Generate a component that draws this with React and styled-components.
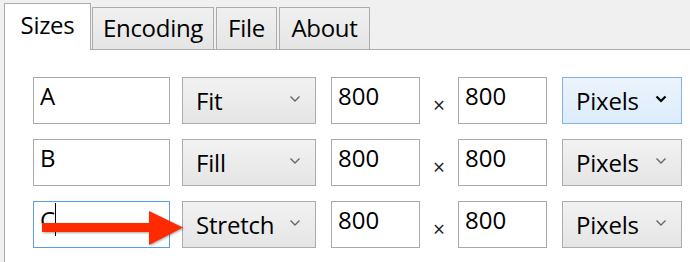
import React from 'react';
import styled, { createGlobalStyle, css } from 'styled-components';

const GlobalStyle = createGlobalStyle`
  html, body {
    margin: 0;
    padding: 0;
    background: #f0f0f0;
    overflow: hidden;
  }
  body {
    font-family: "Open Sans", "Noto Sans", sans-serif;
    color: #000;
  }
`;

const Window = styled.div`
  width: 690px;
  height: 262px;
  padding: 3px 0 0 4px;
  box-sizing: border-box;
  overflow: hidden;
`;

const TabStrip = styled.div`
  display: flex;
  align-items: flex-end;
  height: 46px;
`;

const Tab = styled.div`
  box-sizing: border-box;
  width: ${props => props.$width}px;
  height: 42px;
  margin-left: ${props => (props.$gap === undefined ? 2 : props.$gap)}px;
  border: 1px solid #acacac;
  border-bottom: none;
  background: linear-gradient(#f0f0f0, #e5e5e5);
  font-size: 24px;
  line-height: 39px;
  text-align: center;
  letter-spacing: -0.3px;
  white-space: nowrap;

  ${props => props.$active && css`
    position: relative;
    z-index: 1;
    height: 47px;
    margin: 0 0 -1px 0;
    background: #fff;
    line-height: 42px;
  `}
`;

const Pane = styled.div`
  position: relative;
  width: 720px;
  height: 240px;
  box-sizing: border-box;
  border: 1px solid #acacac;
  background: #fff;
  padding: 27px 0 0 28px;
  display: flex;
  flex-direction: column;
  gap: 15px;
`;

const Row = styled.div`
  display: flex;
  align-items: stretch;
  height: 47px;
`;

const Field = styled.div`
  box-sizing: border-box;
  width: ${props => props.$width}px;
  margin-left: ${props => props.$gap || 0}px;
  border: 1px solid ${props => (props.$focused ? '#5a9fe6' : '#a9a9a9')};
  background: #fff;
  padding: 2px 6px 0;
  font-size: 24px;
  line-height: 31px;
  display: flex;
  align-items: flex-start;
`;

const Caret = styled.span`
  display: block;
  width: 1px;
  height: 33px;
  margin-top: -1px;
  background: #000;
`;

const Select = styled.div`
  box-sizing: border-box;
  width: ${props => props.$width}px;
  margin-left: ${props => props.$gap || 0}px;
  border: 1px solid ${props => (props.$hover ? '#7eb4ea' : '#acacac')};
  background: ${props => (props.$hover
    ? 'linear-gradient(#ecf4fc, #dcecfc)'
    : 'linear-gradient(#f2f2f2, #e5e5e5)')};
  padding: 0 14px 0 13px;
  display: flex;
  align-items: center;
  justify-content: space-between;
  font-size: 24px;
  line-height: 30px;
  letter-spacing: -0.2px;
`;

const Chevron = styled.svg`
  width: 12px;
  height: 8px;
  margin-top: -4px;
  flex: none;
`;

const Times = styled.div`
  width: 38px;
  display: flex;
  justify-content: center;
  align-items: center;
  padding-top: 9px;
  font-size: 21px;
  color: #222;
`;

const Arrow = styled.svg`
  position: absolute;
  left: 35px;
  top: 158px;
  width: 146px;
  height: 40px;
  overflow: visible;
  filter: drop-shadow(1px 1px 1px rgba(0, 0, 0, 0.35));
`;

const ChevronIcon = ({ dark }) => (
  <Chevron viewBox="0 0 12 8">
    <path
      d="M1.5 1.5 L6 6 L10.5 1.5"
      fill="none"
      stroke={dark ? '#000' : '#666'}
      strokeWidth={dark ? 2.2 : 1.4}
    />
  </Chevron>
);

const rows = [
  { name: 'A', mode: 'Fit', hover: true },
  { name: 'B', mode: 'Fill' },
  { name: 'C', mode: 'Stretch', focused: true },
];

export default function App() {
  return (
    <Window>
      <GlobalStyle />
      <TabStrip>
        <Tab $active $width={87}>Sizes</Tab>
        <Tab $width={122} $gap={1}>Encoding</Tab>
        <Tab $width={61}>File</Tab>
        <Tab $width={91}>About</Tab>
      </TabStrip>
      <Pane>
        {rows.map(r => (
          <Row key={r.name}>
            <Field $width={137} $focused={r.focused}>
              {r.name}
              {r.focused && <Caret />}
            </Field>
            <Select $width={134} $gap={12}>
              {r.mode}
              <ChevronIcon />
            </Select>
            <Field $width={89} $gap={15}>800</Field>
            <Times>×</Times>
            <Field $width={89}>800</Field>
            <Select $width={120} $gap={15} $hover={r.hover}>
              Pixels
              <ChevronIcon dark={r.hover} />
            </Select>
          </Row>
        ))}
        <Arrow viewBox="0 0 146 40">
          <rect x="2" y="15" width="110" height="9" fill="#ff2a00" />
          <polygon points="109,3 143,19.5 109,37" fill="#ff2a00" />
        </Arrow>
      </Pane>
    </Window>
  );
}
